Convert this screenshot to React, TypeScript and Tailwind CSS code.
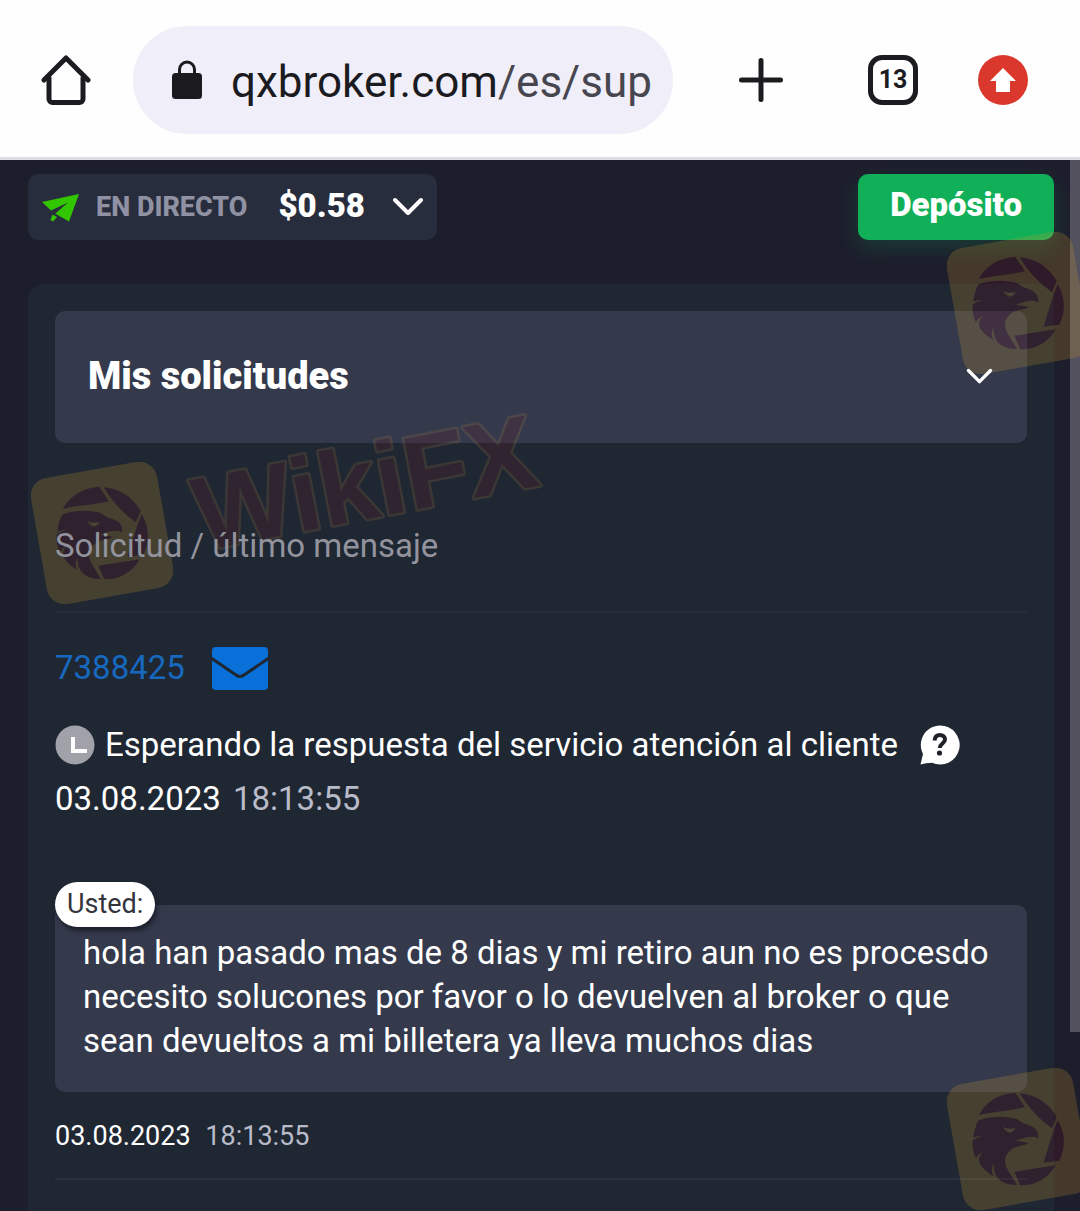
import type { ReactNode } from "react";

function HomeIcon() {
  return (
    <svg viewBox="0 0 50 52" className="h-[52px] w-[50px]" fill="none" stroke="#1c1b1f" strokeWidth="5" strokeLinecap="round" strokeLinejoin="round" aria-hidden="true">
      <path d="M3 26 25 4l22 22" />
      <path d="M8 24v21a3.500 3.500 0 0 0 3.500 3.500h27a3.500 3.500 0 0 0 3.500-3.500V24" />
    </svg>
  );
}

function LockIcon() {
  return (
    <svg viewBox="0 0 30 40" className="h-[40px] w-[30px] shrink-0" aria-hidden="true">
      <path d="M7.500 15V9.500a7.500 7.500 0 0 1 15 0V15" fill="none" stroke="#1b1b1f" strokeWidth="3" />
      <rect x="0" y="13" width="30" height="26" rx="3.500" fill="#1b1b1f" />
    </svg>
  );
}

function PlusIcon() {
  return (
    <svg viewBox="0 0 44 44" className="size-[44px]" stroke="#1c1b1f" strokeWidth="5" strokeLinecap="round" aria-hidden="true">
      <path d="M22 2.500v39M2.500 22h39" />
    </svg>
  );
}

function Chevron({ className }: { className: string }) {
  return (
    <svg viewBox="0 0 30 20" className={className} fill="none" stroke="white" strokeWidth="4" strokeLinecap="round" strokeLinejoin="round" aria-hidden="true">
      <path d="M2 3l13 13L28 3" />
    </svg>
  );
}

function PlaneIcon() {
  return (
    <svg viewBox="0 0 38 29" className="h-[29px] w-[38px] shrink-0" aria-hidden="true">
      <path d="M37 1 0 9l9 8.500 4 3L27 28.500z" fill="#32c600" />
      <path d="M9 17.500 26 9.500 14.500 19.500 13 21z" fill="#282d3d" />
      <path d="M10.500 21.500 15 24 11 28.500 8.500 27z" fill="#32c600" />
    </svg>
  );
}

function Badge({ className }: { className: string }) {
  return (
    <svg viewBox="52 205 426 426" className={className} aria-hidden="true">
      <g opacity="0.22">
        <rect x="73" y="226" width="384" height="384" rx="54" transform="rotate(-10 265 418)" fill="#d19a2d" />
        <g fill="#6d0e20">
          <path d="M147 346C170 304 210 282 257 279L286 323C235 334 190 336 147 346Z" />
          <path d="M270 281C320 285 358 312 381 352L367 386C330 360 297 326 270 281Z" />
          <path d="M384 362C408 400 408 446 389 483L342 489C354 450 366 405 384 362Z" />
          <path d="M254 516L378 497C355 538 313 561 271 556Z" />
          <path d="M133 398C140 378 140 366 150 360C185 350 230 347 266 360C275 370 290 373 302 378C320 386 328 398 325 416C310 408 290 411 258 424C272 425 285 427 298 430C284 439 262 438 250 446C226 462 220 482 233 508L262 556C238 557 219 550 204 536C193 518 190 502 193 490C184 505 185 518 192 530C166 514 146 494 148 478C149 468 155 461 159 456C145 464 142 470 139 477C131 460 127 440 129 423C138 415 148 412 158 408C147 409 138 411 131 414Z" />
        </g>
        <path d="M220 382Q238 391 258 384Q252 400 236 398Q226 394 220 382Z" fill="#d19a2d" />
        <path d="M236 388Q244 392 252 388Q243 397 236 388Z" fill="#fff0a0" />
      </g>
    </svg>
  );
}

function WatermarkText() {
  return (
    <svg viewBox="0 0 420 200" className="pointer-events-none absolute left-[160px] top-[380px] h-[200px] w-[420px] overflow-visible" aria-hidden="true">
      <g opacity="0.2">
        <text
          x="42"
          y="171"
          transform="rotate(-11 42 171)"
          fontFamily="'Liberation Sans', sans-serif"
          fontWeight="700"
          fontSize="104"
          fill="#6e1a20"
          stroke="#a87840"
          strokeWidth="5"
          strokeLinejoin="round"
          paintOrder="stroke"
        >
          WikiFX
        </text>
      </g>
    </svg>
  );
}

function BrowserBar() {
  return (
    <header className="flex h-[160px] items-center border-b-[3px] border-[#dddde6] bg-[#fefefe] pl-[41px] pr-[52px] pt-[3px]">
      <button type="button" aria-label="Inicio">
        <HomeIcon />
      </button>
      <div className="ml-[42px] mr-[66px] flex h-[108px] min-w-0 flex-1 items-center rounded-full bg-[#f0eef8] pl-[39px] text-[44px]">
        <LockIcon />
        <a href="#sup" className="ml-[29px] whitespace-nowrap pt-[4px] text-[#1b1b1f]">
          qxbroker.com<span className="text-[#47464f]">/es/sup</span>
        </a>
      </div>
      <button type="button" aria-label="Nueva pestaña">
        <PlusIcon />
      </button>
      <button type="button" aria-label="Pestañas" className="ml-[85px] flex size-[50px] items-center justify-center rounded-[14px] border-[5px] border-[#1c1b1f] text-[25px] font-bold text-[#1c1b1f]">
        13
      </button>
      <button type="button" aria-label="Actualizar" className="ml-[60px] flex size-[50px] items-center justify-center rounded-full bg-[#da382c]">
        <svg viewBox="0 0 26 26" className="size-[26px]" fill="white" aria-hidden="true">
          <path d="M13 1 26 14h-6v11H6V14H0z" />
        </svg>
      </button>
    </header>
  );
}

function Timestamp({ className, children }: { className: string; children: ReactNode }) {
  return <p className={className}>{children}</p>;
}

export default function App() {
  return (
    <div className="relative flex min-h-screen flex-col overflow-hidden bg-[#1d1e2c] font-['Roboto',sans-serif] text-white">
      <BrowserBar />
      <main className="relative flex flex-1 flex-col pl-[28px] pr-[26px] pt-[14px]">
        <div className="absolute right-0 top-0 h-[83%] w-[10px] bg-[#52515d]" />
        <div className="flex items-center justify-between">
          <button type="button" className="flex h-[66px] items-center rounded-[10px] bg-[#282d3d] px-[14px]">
            <PlaneIcon />
            <span className="ml-[16px] text-[27px] font-extrabold text-[#9092a4]">EN DIRECTO</span>
            <span className="ml-[31px] pb-[3px] text-[33px] font-black">$0.58</span>
            <Chevron className="ml-[28px] h-[20px] w-[30px]" />
          </button>
          <button type="button" className="h-[66px] rounded-[10px] bg-[#11b058] px-[32px] pb-[4px] text-[33px] font-black shadow-[0_8px_20px_rgba(17,176,88,0.2)]">
            Depósito
          </button>
        </div>

        <section className="mt-[44px] flex-1 rounded-t-[16px] bg-[#1f2733] px-[27px] pb-[30px] pt-[27px]">
          <button type="button" className="flex h-[132px] w-full items-center justify-between rounded-[10px] bg-[#343a4c] pb-[2px] pl-[33px] pr-[34px] text-[38px] font-black">
            Mis solicitudes
            <Chevron className="relative z-10 h-[17px] w-[27px]" />
          </button>
          <h2 className="relative z-10 mt-[81px] text-[33px] leading-[44px] text-[#92939d]">Solicitud / último mensaje</h2>
          <hr className="mt-[43px] border-t-2 border-[#252d3a]" />

          <div className="mt-[32px] flex h-[46px] items-center">
            <a href="#7388425" className="text-[33px] leading-[44px] text-[#1769c0]">7388425</a>
            <svg viewBox="0 0 56 43" className="ml-[27px] h-[43px] w-[56px]" aria-hidden="true">
              <rect width="56" height="43" rx="4" fill="#0870d8" />
              <path d="M-1 11 24 28q4 3 8 0L57 11" fill="none" stroke="#1f2733" strokeWidth="3" />
            </svg>
          </div>

          <div className="mt-[32px] flex items-center text-[33px] leading-[44px]">
            <svg viewBox="0 0 40 40" className="mr-[10px] size-[40px] shrink-0" aria-hidden="true">
              <circle cx="20" cy="20" r="19.500" fill="#a1a1a9" />
              <path d="M18 12v14h14" fill="none" stroke="white" strokeWidth="4" />
            </svg>
            <p>Esperando la respuesta del servicio atención al cliente</p>
            <button type="button" aria-label="Ayuda" className="ml-[22px]">
              <svg viewBox="0 0 40 40" className="size-[40px]" aria-hidden="true">
                <path d="M20 .5a19.500 19.500 0 1 1-8 37.200Q6 38 .5 39.500L3 29A19.500 19.500 0 0 1 20 .5Z" fill="white" />
                <path d="M14.500 15.500C15 11.500 17 10 19.800 10c3.200 0 5.200 2 5.200 4.600 0 3.900-5.200 4.100-5.200 8.400" fill="none" stroke="#1f2229" strokeWidth="4" />
                <circle cx="19.500" cy="28" r="2.600" fill="#1f2229" />
              </svg>
            </button>
          </div>
          <Timestamp className="mt-[10px] text-[33px] leading-[44px]">
            03.08.2023 <span className="ml-1 text-[#b9bbc8]">18:13:55</span>
          </Timestamp>

          <article className="relative mt-[84px] rounded-[10px] bg-[#343a4c] px-[28px] pb-[29px] pt-[26px]">
            <span className="absolute -top-[23px] left-0 flex h-[45px] items-center rounded-full bg-white px-[12px] text-[27px] text-[#34343c] shadow-[2px_4px_4px_rgba(20,22,32,0.7)]">
              Usted:
            </span>
            <p className="text-[33px] leading-[44px]">
              hola han pasado mas de 8 dias y mi retiro aun no es procesdo necesito solucones por favor o lo devuelven al broker o que sean devueltos a mi billetera ya lleva muchos dias
            </p>
          </article>
          <Timestamp className="mt-[26px] text-[27px] leading-[36px]">
            03.08.2023 <span className="ml-2 text-[#b9bbc8]">18:13:55</span>
          </Timestamp>
          <hr className="mt-[24px] border-t-2 border-[#2a3240]" />
        </section>
      </main>
      <Badge className="pointer-events-none absolute left-[31px] top-[462px] size-[142px]" />
      <Badge className="pointer-events-none absolute -right-[9px] top-[232px] size-[142px]" />
      <Badge className="pointer-events-none absolute -right-[9px] top-[1068px] size-[142px]" />
      <WatermarkText />
    </div>
  );
}
